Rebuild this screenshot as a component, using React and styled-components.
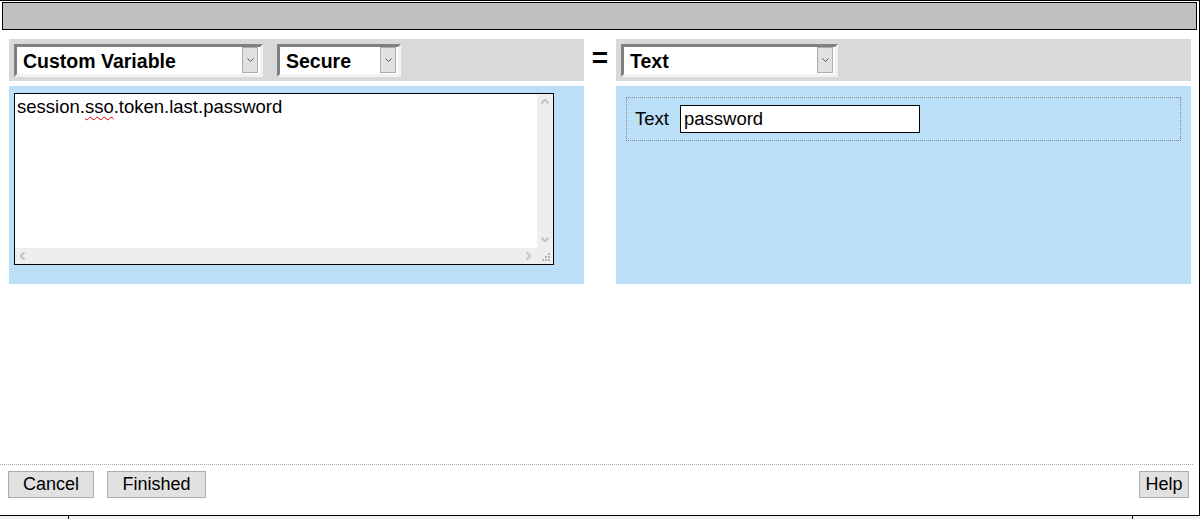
import React from 'react';
import styled, {createGlobalStyle} from 'styled-components';

const GlobalStyle = createGlobalStyle`
    * { box-sizing: border-box; }
    html, body { margin: 0; padding: 0; background: #ffffff; }
    body {
        font-family: "Liberation Sans", Arial, sans-serif;
        color: #000000;
    }
`;

const Frame = styled.div`
    display: flex;
    flex-direction: column;
    width: 1203px;
    height: 519px;
    overflow: hidden;
`;

const Window = styled.div`
    display: flex;
    flex-direction: column;
    width: 1200px;
    height: 516px;
    border-top: 1px solid #000;
    border-right: 1px solid #000;
    border-bottom: 1px solid #000;
`;

const TitleBar = styled.div`
    height: 28px;
    margin: 1px 2px 0 2px;
    border: 1px solid #000;
    background: #c0c0c0;
`;

const Content = styled.div`
    display: flex;
    padding: 9px 0 0 9px;
`;

const Column = styled.div`
    display: flex;
    flex-direction: column;
    gap: 5px;
    width: 575px;
`;

const Header = styled.div`
    display: flex;
    align-items: center;
    gap: 14px;
    height: 42px;
    padding-left: 5px;
    background: #d9d9d9;
`;

const Equals = styled.div`
    display: flex;
    justify-content: center;
    align-items: center;
    width: 32px;
    height: 42px;
    padding-bottom: 5px;
    font-size: 28px;
    font-weight: bold;
`;

const SelectBox = styled.div`
    display: flex;
    align-items: stretch;
    width: ${p => p.$width}px;
    height: 33px;
    border-style: solid;
    border-width: 3px;
    border-color: #808080 #f2f2f2 #f2f2f2 #808080;
    background: #ffffff;
`;

const SelectLabel = styled.div`
    flex: 1;
    display: flex;
    align-items: center;
    padding: 2px 0 0 6px;
    font-size: 19.5px;
    font-weight: bold;
`;

const DropButton = styled.div`
    display: flex;
    align-items: center;
    justify-content: center;
    width: 16px;
    margin: 0 2px 1px 0;
    background: #e1e1e1;
    border: 1px solid #adadad;
`;

const Pane = styled.div`
    height: 198px;
    background: #bbdff6;
    padding: ${p => p.$pad};
`;

const TextArea = styled.div`
    display: grid;
    grid-template-columns: 1fr 16px;
    grid-template-rows: 1fr 16px;
    width: 540px;
    height: 172px;
    border: 1px solid #000;
    background: #ffffff;
`;

const AreaText = styled.div`
    padding: 2px 0 0 2px;
    font-size: 18.5px;
`;

const Squiggle = styled.span`
    text-decoration-line: underline;
    text-decoration-style: wavy;
    text-decoration-color: #e00000;
    text-decoration-thickness: 1px;
    text-underline-offset: 3px;
`;

const VScroll = styled.div`
    display: flex;
    flex-direction: column;
    justify-content: space-between;
    align-items: center;
    padding: 5px 0 6px 0;
    background: #eeeeee;
`;

const HScroll = styled.div`
    display: flex;
    justify-content: space-between;
    align-items: center;
    padding: 0 6px 0 5px;
    background: #eeeeee;
`;

const Corner = styled.div`
    display: flex;
    align-items: flex-end;
    justify-content: flex-end;
    padding: 0 2px 2px 0;
    background: #eeeeee;
`;

const FieldBox = styled.div`
    display: flex;
    align-items: center;
    gap: 11px;
    height: 44px;
    padding: 0 8px;
    border: 1px dotted #858585;
    font-size: 18.5px;
`;

const Input = styled.div`
    display: flex;
    align-items: center;
    width: 240px;
    height: 28px;
    padding-left: 3px;
    border: 1px solid #000;
    background: #ffffff;
`;

const Footer = styled.div`
    display: flex;
    align-items: center;
    gap: 13px;
    margin: auto 6px 0 0;
    padding: 6px 4px 17px 8px;
    border-top: 1px dotted #a8a8a8;
`;

const Button = styled.div`
    display: flex;
    align-items: center;
    justify-content: center;
    width: ${p => p.$width}px;
    height: 27px;
    margin-left: ${p => (p.$right ? 'auto' : '0')};
    background: #e1e1e1;
    border: 1px solid #adadad;
    font-size: 18px;
`;

const StatusBar = styled.div`
    display: flex;
    flex: 1;
    width: 1200px;
    background: #f0f0f0;
`;

const StatusCell = styled.div`
    width: ${p => p.$width}px;
    border-right: 1px solid #000;
`;

const Chevron = ({dir = 'down', color = '#555', w = 7, h = 4, sw = 1}) => {
    const pts = {
        down: `0.5,0.5 ${w / 2},${h - 0.5} ${w - 0.5},0.5`,
        up: `0.5,${h - 0.5} ${w / 2},0.5 ${w - 0.5},${h - 0.5}`,
        left: `${w - 0.5},0.5 0.5,${h / 2} ${w - 0.5},${h - 0.5}`,
        right: `0.5,0.5 ${w - 0.5},${h / 2} 0.5,${h - 0.5}`
    }[dir];
    return (
        <svg width={w} height={h} viewBox={`0 0 ${w} ${h}`}>
            <polyline points={pts} fill="none" stroke={color} strokeWidth={sw}/>
        </svg>
    );
};

const Grip = () => (
    <svg width="9" height="9" viewBox="0 0 9 9">
        {[[6, 0], [3, 3], [6, 3], [0, 6], [3, 6], [6, 6]].map(([x, y]) => (
            <rect key={`${x}-${y}`} x={x} y={y} width="2" height="2" fill="#b4b4b4"/>
        ))}
    </svg>
);

const Select = ({width, label}) => (
    <SelectBox $width={width}>
        <SelectLabel>{label}</SelectLabel>
        <DropButton>
            <Chevron w={7} h={4}/>
        </DropButton>
    </SelectBox>
);

const App = () => {
    return (
        <>
            <GlobalStyle/>
            <Frame>
                <Window>
                    <TitleBar/>
                    <Content>
                        <Column>
                            <Header>
                                <Select width={249} label="Custom Variable"/>
                                <Select width={124} label="Secure"/>
                            </Header>
                            <Pane $pad="7px 0 0 5px">
                                <TextArea>
                                    <AreaText>
                                        session.<Squiggle>sso</Squiggle>.token.last.password
                                    </AreaText>
                                    <VScroll>
                                        <Chevron dir="up" color="#c2c2c2" w={8} h={5} sw={2}/>
                                        <Chevron dir="down" color="#c2c2c2" w={8} h={5} sw={2}/>
                                    </VScroll>
                                    <HScroll>
                                        <Chevron dir="left" color="#c2c2c2" w={5} h={8} sw={2}/>
                                        <Chevron dir="right" color="#c2c2c2" w={5} h={8} sw={2}/>
                                    </HScroll>
                                    <Corner>
                                        <Grip/>
                                    </Corner>
                                </TextArea>
                            </Pane>
                        </Column>
                        <Equals>=</Equals>
                        <Column>
                            <Header>
                                <Select width={217} label="Text"/>
                            </Header>
                            <Pane $pad="11px 10px 0 10px">
                                <FieldBox>
                                    <span>Text</span>
                                    <Input>password</Input>
                                </FieldBox>
                            </Pane>
                        </Column>
                    </Content>
                    <Footer>
                        <Button $width={86}>Cancel</Button>
                        <Button $width={99}>Finished</Button>
                        <Button $width={50} $right>Help</Button>
                    </Footer>
                </Window>
                <StatusBar>
                    <StatusCell $width={69}/>
                    <StatusCell $width={1064}/>
                </StatusBar>
            </Frame>
        </>
    );
};

export default App;
